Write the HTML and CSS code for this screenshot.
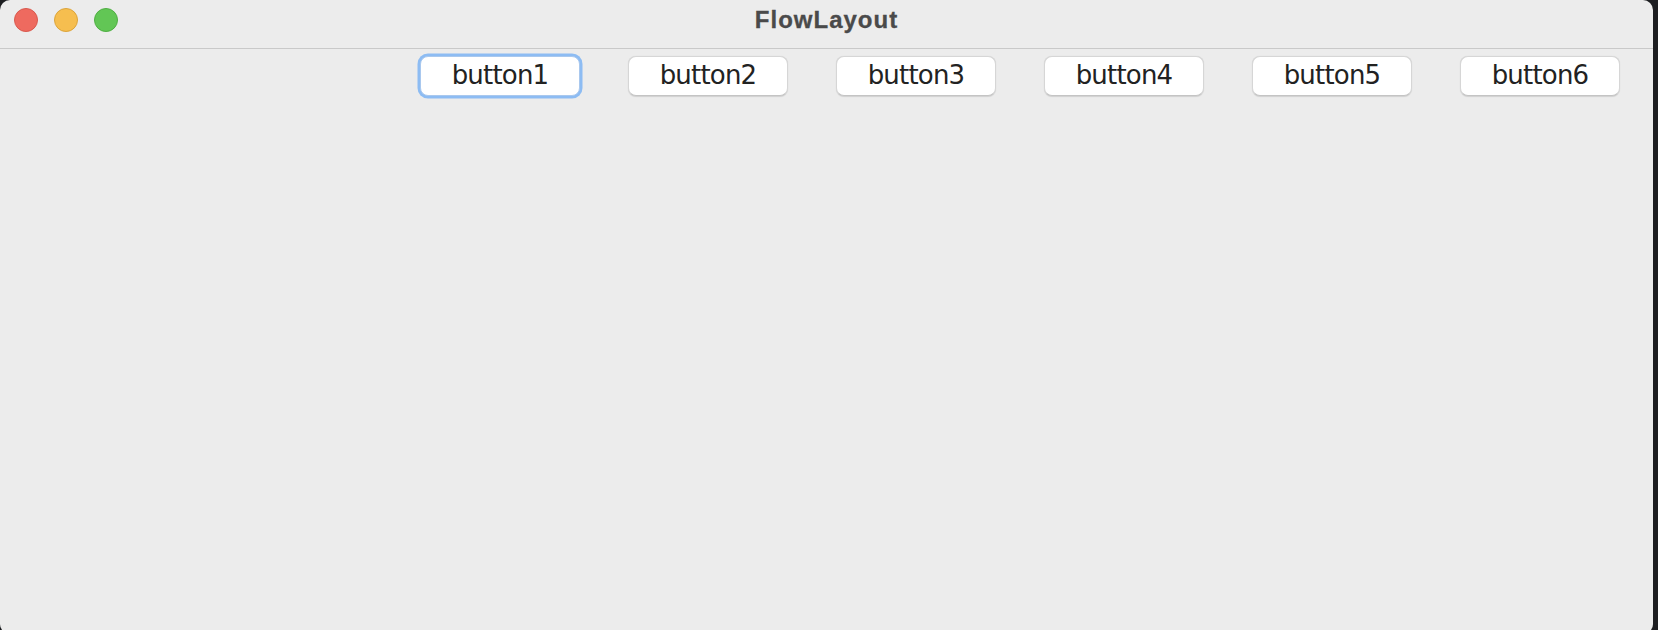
FILE: index.html
```html
<!DOCTYPE html>
<html>
<head>
<meta charset="utf-8">
<title>FlowLayout</title>
<link rel="stylesheet" href="styles.css">
</head>
<body>
<div class="window">
  <div class="titlebar">
    <div class="lights">
      <span class="light red"></span>
      <span class="light yellow"></span>
      <span class="light green"></span>
    </div>
    <div class="title">FlowLayout</div>
  </div>
  <div class="content">
    <div class="btn focused">button1</div>
    <div class="btn">button2</div>
    <div class="btn">button3</div>
    <div class="btn">button4</div>
    <div class="btn">button5</div>
    <div class="btn">button6</div>
  </div>
</div>
</body>
</html>
```
FILE: styles.css
```css
html, body {
  margin: 0;
  padding: 0;
  height: 100%;
  overflow: hidden;
  background: #1d1e21;
}
.window {
  width: 1653px;
  height: 634px;
  background: #ececec;
  border-radius: 10px;
  display: flex;
  flex-direction: column;
  overflow: hidden;
}
.titlebar {
  position: relative;
  box-sizing: border-box;
  height: 49px;
  padding-top: 8px;
  border-bottom: 1px solid #c9c9c9;
  display: flex;
  align-items: flex-start;
  justify-content: center;
  flex-shrink: 0;
}
.lights {
  position: absolute;
  left: 14px;
  top: 8px;
  display: flex;
  gap: 16px;
}
.light {
  width: 22px;
  height: 22px;
  border-radius: 50%;
  border: 1px solid transparent;
}
.red { background: #ee6a5f; border-color: #d8594e; }
.yellow { background: #f6be4f; border-color: #dba43b; }
.green { background: #62c655; border-color: #4fae43; }
.title {
  font-family: "Liberation Sans", Arial, sans-serif;
  font-weight: bold;
  font-size: 24px;
  line-height: 24px;
  letter-spacing: 1px;
  color: #4a4a4a;
  -webkit-text-stroke: 0.3px #4a4a4a;
}
.content {
  display: flex;
  justify-content: flex-end;
  gap: 48px;
  padding: 7px 33px 0 0;
}
.btn {
  box-sizing: border-box;
  width: 160px;
  height: 40px;
  background: #ffffff;
  border: 1px solid #d6d6d6;
  border-bottom-color: #c4c4c4;
  border-radius: 8px;
  box-shadow: 0 0.5px 1px rgba(0,0,0,0.12);
  display: flex;
  align-items: center;
  justify-content: center;
  font-family: "DejaVu Sans", sans-serif;
  font-size: 26px;
  letter-spacing: -0.8px;
  color: #222222;
  padding-bottom: 2px;
}
.btn.focused {
  border: 1px solid #a9c8ee;
  box-shadow: 0 0 0 2.5px #8dbcf3;
}
```
